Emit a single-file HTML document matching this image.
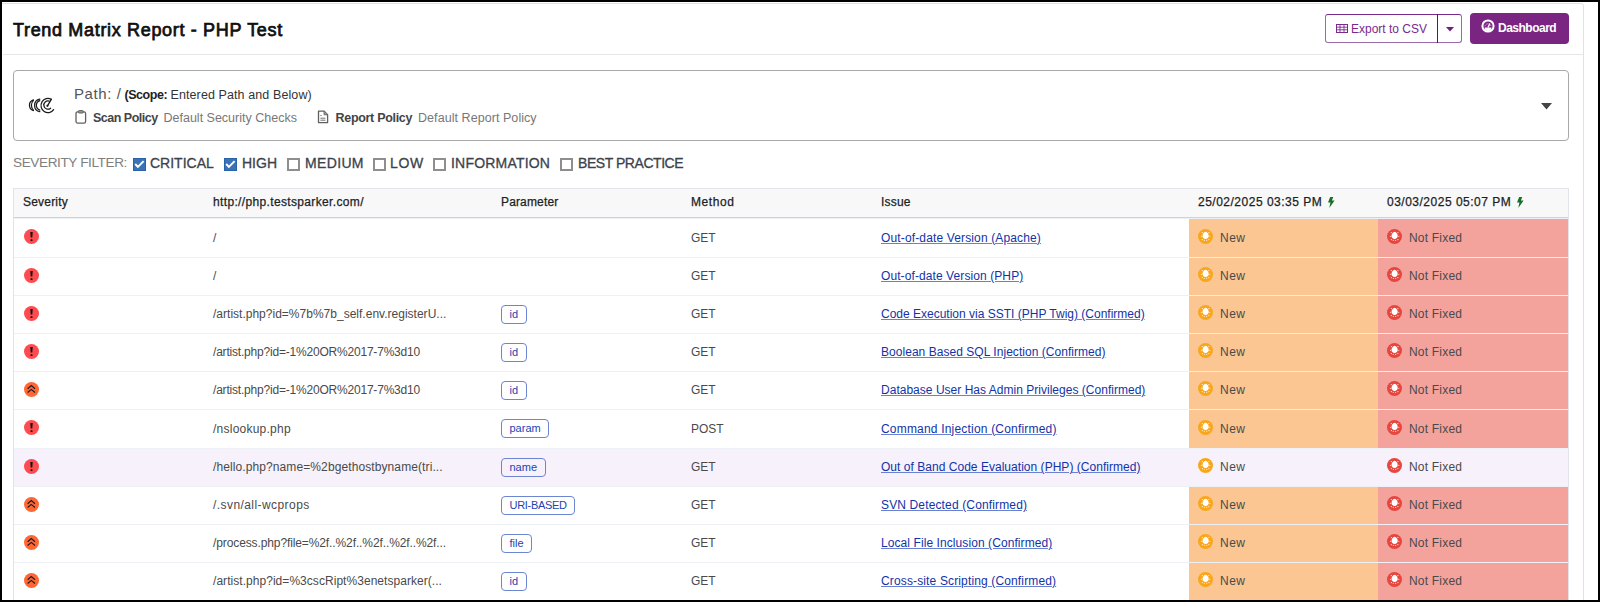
<!DOCTYPE html>
<html><head><meta charset="utf-8">
<style>
*{box-sizing:border-box;margin:0;padding:0}
html,body{width:1600px;height:602px;overflow:hidden;background:#fff;font-family:"Liberation Sans",sans-serif;color:#222}
.frame{position:absolute;left:0;top:0;width:1600px;height:602px;border:2px solid #000;pointer-events:none;z-index:50}
.card{position:absolute;left:-2px;top:3px;width:1586px;height:700px;border:1px solid #e2e2e2;border-radius:3px}
.hdrline{position:absolute;left:3px;top:54px;width:1580px;height:1px;background:#e6e6e6}
.abs{position:absolute;white-space:nowrap}
.title{left:13px;top:21px;font-size:18px;line-height:18px;font-weight:normal;color:#111;letter-spacing:0.67px;-webkit-text-stroke:0.75px #111}
.btn-exp{position:absolute;left:1325px;top:14px;width:137px;height:29px;border:1px solid #9b6aa8;border-top-color:#7a2a8a;border-radius:3px;background:#fff}
.btn-exp .dv{position:absolute;left:111px;top:-1px;width:1px;height:29px;background:#5f1070}
.btn-exp .tx{position:absolute;left:25px;top:8px;font-size:12px;line-height:12px;color:#7b2a8c}
.btn-dash{position:absolute;left:1470px;top:13px;width:99px;height:31px;background:#7b2583;border-radius:4px}
.btn-dash .tx{position:absolute;left:28px;top:9px;font-size:12px;line-height:12px;color:#fff;font-weight:bold;letter-spacing:-0.5px}
.pathbox{position:absolute;left:13px;top:70px;width:1556px;height:71px;border:1px solid #a8a8a8;border-radius:4px}
.t15{font-size:15px;line-height:15px;color:#555;letter-spacing:0.6px}
.t12{font-size:12.5px;line-height:13px;color:#555}
.b{font-weight:bold;color:#444}
.lite{color:#777}
.filter{top:156px;font-size:14px;line-height:14px;color:#3c424c;-webkit-text-stroke:0.3px #3c424c}
.cb{position:absolute;top:158px;width:13px;height:13px}
.cb.on{background:#3a72b8;border:1px solid #2a62a8}
.cb.off{border:2px solid #8e8e8e;background:#fff}
.tbl{position:absolute;left:13px;top:188px;width:1556px;height:420px;border:1px solid #e1e4e9;border-bottom:none}
.th{position:absolute;left:0;top:0;width:1554px;height:29px;background:#f8f8f8;border-bottom:1px solid #d2d2d2}
.hc{position:absolute;top:7px;letter-spacing:0.2px;font-size:12px;line-height:12px;color:#1e1e1e;white-space:nowrap;-webkit-text-stroke:0.25px #1e1e1e}
.row{position:absolute;left:0;width:1554px;border-top:1px solid #edf1f6}
.row.hov{background:#f6f1fb}
.c{position:absolute;top:0;white-space:nowrap;font-size:12px;line-height:12px;color:#4a4a4a}
.new{position:absolute;left:1175px;top:0;width:189px;bottom:0;background:#fbc692}
.nf{position:absolute;left:1364px;top:0;width:190px;bottom:0;background:#f4a39c}
.hov .new,.hov .nf{background:transparent}
.badge{position:absolute;height:19px;border:1px solid #6d86d2;border-radius:4px;font-size:11px;line-height:17px;color:#2343b4;padding:0 7.5px}
.lnk{color:#1233a8;text-decoration:underline;text-decoration-color:#6a80d0;text-underline-offset:1px}
</style></head><body>
<div class="card"></div>
<div class="hdrline"></div>
<div class="abs title">Trend Matrix Report - PHP Test</div>
<div class="btn-exp">
 <svg style="position:absolute;left:10px;top:9px" width="12" height="9" viewBox="0 0 12 9"><rect x="0.5" y="0.5" width="11" height="8" fill="none" stroke="#7b2a8c" stroke-width="1"/><path d="M0 3.2H12M0 5.8H12M4 0V9M8 0V9" stroke="#7b2a8c" stroke-width="0.9"/></svg>
 <div class="tx">Export to CSV</div>
 <div class="dv"></div>
 <svg style="position:absolute;left:120px;top:12px" width="8" height="5" viewBox="0 0 8 5"><path d="M0 0H8L4 4.5Z" fill="#6f1f80"/></svg>
</div>
<div class="btn-dash">
 <svg style="position:absolute;left:11px;top:6px" width="14" height="14" viewBox="0 0 14 14"><circle cx="7" cy="7" r="5.6" fill="none" stroke="#fff" stroke-width="2"/><path d="M3.6 8.6 A3.4 3.4 0 0 0 10.4 8.6 Z" fill="#fff"/><path d="M3.9 7.2 A3.2 3.2 0 0 1 10.1 7.2" fill="none" stroke="#fff" stroke-width="1" stroke-dasharray="0.9 0.9" opacity="0.85"/><path d="M7 8.4 L8.9 4.6" stroke="#fff" stroke-width="1.3"/></svg>
 <div class="tx">Dashboard</div>
</div>
<div class="pathbox">
 <svg style="position:absolute;left:14px;top:26px" width="28" height="18" viewBox="28 97 28 18">
  <g fill="none" stroke="#1a1a1a" stroke-width="1.25" stroke-linecap="round">
   <path d="M33.4 99.9 A5.6 5.6 0 0 0 33.4 110.6"/><path d="M33.4 100.4 A6.9 6.9 0 0 0 33.4 110.1"/>
   <path d="M39.8 99.2 A6.3 6.3 0 0 0 39.8 111.6"/><path d="M39.8 100.6 A5 5 0 0 0 39.8 110.1"/>
   <path d="M51.3 99.4 A6.9 7.1 0 1 0 53.6 109.6"/>
   <path d="M49.2 101.2 A4.1 4.1 0 1 0 50.6 108.2"/>
   <path d="M51.3 99.4 L47.6 105.6"/>
  </g>
  <circle cx="47.4" cy="105.8" r="1.1" fill="#1a1a1a"/>
 </svg>
 <div class="abs t15" style="left:60px;top:15px">Path: /</div>
 <div class="abs t12 b" style="left:110.5px;top:18px;color:#222;letter-spacing:-0.45px">(Scope:</div>
 <div class="abs t12" style="left:156.5px;top:18px;color:#333;letter-spacing:0.1px">Entered Path and Below)</div>
 <svg style="position:absolute;left:61px;top:39px" width="12" height="14" viewBox="0 0 12 14"><rect x="1" y="1.8" width="9.6" height="11.3" rx="1.6" fill="none" stroke="#606060" stroke-width="1.3"/><rect x="3.2" y="0.6" width="5.2" height="2.4" rx="1" fill="#9a9a9a" stroke="#606060" stroke-width="1"/></svg>
 <div class="abs t12 b" style="left:79px;top:41px;letter-spacing:-0.5px">Scan Policy</div>
 <div class="abs t12 lite" style="left:149.5px;top:41px">Default Security Checks</div>
 <svg style="position:absolute;left:303px;top:39px" width="12" height="14" viewBox="0 0 12 14"><path d="M1.5 1.2 H7.2 L10.6 4.6 V12.6 H1.5 Z" fill="none" stroke="#606060" stroke-width="1.3" stroke-linejoin="round"/><path d="M7 1.2 V4.8 H10.6" fill="#999" stroke="#606060" stroke-width="0.8"/><path d="M3.4 5.5H4.6M3.4 8.2H8.4M3.4 10.2H8.4" stroke="#707070" stroke-width="1"/></svg>
 <div class="abs t12 b" style="left:321.5px;top:41px;letter-spacing:-0.3px">Report Policy</div>
 <div class="abs t12 lite" style="left:404px;top:41px;letter-spacing:0.06px">Default Report Policy</div>
 <svg style="position:absolute;left:1527px;top:32px" width="11" height="7" viewBox="0 0 11 7"><path d="M0 0H11L5.5 6.5Z" fill="#444"/></svg>
</div>

<div class="abs filter" style="left:13px;top:155.5px;font-size:13.6px;color:#808080;-webkit-text-stroke:0;letter-spacing:-0.4px">SEVERITY FILTER:</div>
<div class="cb on" style="left:133px"><svg style="position:absolute;left:-1px;top:-1px" width="13" height="13" viewBox="0 0 13 13"><path d="M2.2 6 L4.9 8.9 L10.6 3.2" stroke="#fff" stroke-width="1.9" fill="none"/></svg></div>
<div class="abs filter" style="left:150px;letter-spacing:0.00px">CRITICAL</div>
<div class="cb on" style="left:224px"><svg style="position:absolute;left:-1px;top:-1px" width="13" height="13" viewBox="0 0 13 13"><path d="M2.2 6 L4.9 8.9 L10.6 3.2" stroke="#fff" stroke-width="1.9" fill="none"/></svg></div>
<div class="abs filter" style="left:242px;letter-spacing:0.00px">HIGH</div>
<div class="cb off" style="left:287px"></div>
<div class="abs filter" style="left:305px;letter-spacing:0.35px">MEDIUM</div>
<div class="cb off" style="left:373px"></div>
<div class="abs filter" style="left:390px;letter-spacing:0.60px">LOW</div>
<div class="cb off" style="left:433px"></div>
<div class="abs filter" style="left:451px;letter-spacing:0.20px">INFORMATION</div>
<div class="cb off" style="left:560px"></div>
<div class="abs filter" style="left:578px;letter-spacing:-0.45px">BEST PRACTICE</div>
<div class="tbl">
<div class="th">
<div class="hc" style="left:9px;letter-spacing:0.20px">Severity</div>
<div class="hc" style="left:199px;letter-spacing:0.35px">http://php.testsparker.com/</div>
<div class="hc" style="left:487px;letter-spacing:0.15px">Parameter</div>
<div class="hc" style="left:677px;letter-spacing:0.60px">Method</div>
<div class="hc" style="left:867px;letter-spacing:0.20px">Issue</div>
<div class="hc" style="left:1184px;letter-spacing:0.5px">25/02/2025 03:35 PM <span style="display:inline-block;vertical-align:-1.5px;margin-left:2px"><svg width="7" height="11" viewBox="0 0 7 11"><path d="M2.2 0 L5.2 0 L3.9 3.6 L6.6 3.6 L1.3 11 L2.4 5.6 L0 5.6 Z" fill="#17702a"/></svg></span></div>
<div class="hc" style="left:1373px;letter-spacing:0.5px">03/03/2025 05:07 PM <span style="display:inline-block;vertical-align:-1.5px;margin-left:2px"><svg width="7" height="11" viewBox="0 0 7 11"><path d="M2.2 0 L5.2 0 L3.9 3.6 L6.6 3.6 L1.3 11 L2.4 5.6 L0 5.6 Z" fill="#17702a"/></svg></span></div>
</div>
<div class="row" style="top:29px;height:39px">
<div class="new"></div><div class="nf"></div>
<div class="c" style="left:9.7px;top:10.0px;height:15px"><svg width="15" height="15" viewBox="0 0 15 15"><circle cx="7.5" cy="7.5" r="7.5" fill="#fd4b4f"/><path d="M6.3 3.1 H8.7 L8.3 8.4 H6.7 Z" fill="#111"/><rect x="6.55" y="10.3" width="1.9" height="1.8" rx="0.3" fill="#111"/></svg></div>
<div class="c" style="left:199px;top:12.5px;letter-spacing:0.000px">/</div>
<div class="c" style="left:677px;top:12.5px">GET</div>
<div class="c lnk" style="left:867px;top:12.5px;letter-spacing:0.140px">Out-of-date Version (Apache)</div>
<div class="c" style="left:1184px;top:10.0px;height:15px"><svg width="15" height="15" viewBox="0 0 15 15"><circle cx="7.5" cy="7.5" r="7.5" fill="#f9a61b"/><path d="M7.6 2.8 C9.3 3.3 10.7 4.9 10.7 7.1 C10.7 9 9.4 9.9 7.6 9.9 C5.8 9.9 4.5 9 4.5 7.1 C4.5 4.9 5.9 3.3 7.6 2.8 Z" fill="#fff"/><circle cx="4.30" cy="3.60" r="0.55" fill="#fff"/><circle cx="10.90" cy="3.60" r="0.55" fill="#fff"/><circle cx="3.40" cy="7.30" r="0.55" fill="#fff"/><circle cx="11.80" cy="7.30" r="0.55" fill="#fff"/><circle cx="4.30" cy="10.60" r="0.55" fill="#fff"/><circle cx="10.90" cy="10.60" r="0.55" fill="#fff"/><circle cx="6.30" cy="11.30" r="0.55" fill="#fff"/><circle cx="8.70" cy="11.30" r="0.55" fill="#fff"/></svg></div>
<div class="c" style="left:1206px;top:12.5px;letter-spacing:0.5px">New</div>
<div class="c" style="left:1373px;top:10.0px;height:15px"><svg width="15" height="15" viewBox="0 0 15 15"><circle cx="7.5" cy="7.5" r="7.5" fill="#e6463e"/><path d="M7.6 2.8 C9.3 3.3 10.7 4.9 10.7 7.1 C10.7 9 9.4 9.9 7.6 9.9 C5.8 9.9 4.5 9 4.5 7.1 C4.5 4.9 5.9 3.3 7.6 2.8 Z" fill="#fff"/><circle cx="4.30" cy="3.60" r="0.55" fill="#fff"/><circle cx="10.90" cy="3.60" r="0.55" fill="#fff"/><circle cx="3.40" cy="7.30" r="0.55" fill="#fff"/><circle cx="11.80" cy="7.30" r="0.55" fill="#fff"/><circle cx="4.30" cy="10.60" r="0.55" fill="#fff"/><circle cx="10.90" cy="10.60" r="0.55" fill="#fff"/><circle cx="6.30" cy="11.30" r="0.55" fill="#fff"/><circle cx="8.70" cy="11.30" r="0.55" fill="#fff"/></svg></div>
<div class="c" style="left:1395px;top:12.5px;letter-spacing:0.2px">Not Fixed</div>
</div>
<div class="row" style="top:68px;height:38px">
<div class="new"></div><div class="nf"></div>
<div class="c" style="left:9.7px;top:10.0px;height:15px"><svg width="15" height="15" viewBox="0 0 15 15"><circle cx="7.5" cy="7.5" r="7.5" fill="#fd4b4f"/><path d="M6.3 3.1 H8.7 L8.3 8.4 H6.7 Z" fill="#111"/><rect x="6.55" y="10.3" width="1.9" height="1.8" rx="0.3" fill="#111"/></svg></div>
<div class="c" style="left:199px;top:12.0px;letter-spacing:0.000px">/</div>
<div class="c" style="left:677px;top:12.0px">GET</div>
<div class="c lnk" style="left:867px;top:12.0px;letter-spacing:0.090px">Out-of-date Version (PHP)</div>
<div class="c" style="left:1184px;top:9.0px;height:15px"><svg width="15" height="15" viewBox="0 0 15 15"><circle cx="7.5" cy="7.5" r="7.5" fill="#f9a61b"/><path d="M7.6 2.8 C9.3 3.3 10.7 4.9 10.7 7.1 C10.7 9 9.4 9.9 7.6 9.9 C5.8 9.9 4.5 9 4.5 7.1 C4.5 4.9 5.9 3.3 7.6 2.8 Z" fill="#fff"/><circle cx="4.30" cy="3.60" r="0.55" fill="#fff"/><circle cx="10.90" cy="3.60" r="0.55" fill="#fff"/><circle cx="3.40" cy="7.30" r="0.55" fill="#fff"/><circle cx="11.80" cy="7.30" r="0.55" fill="#fff"/><circle cx="4.30" cy="10.60" r="0.55" fill="#fff"/><circle cx="10.90" cy="10.60" r="0.55" fill="#fff"/><circle cx="6.30" cy="11.30" r="0.55" fill="#fff"/><circle cx="8.70" cy="11.30" r="0.55" fill="#fff"/></svg></div>
<div class="c" style="left:1206px;top:12.0px;letter-spacing:0.5px">New</div>
<div class="c" style="left:1373px;top:9.0px;height:15px"><svg width="15" height="15" viewBox="0 0 15 15"><circle cx="7.5" cy="7.5" r="7.5" fill="#e6463e"/><path d="M7.6 2.8 C9.3 3.3 10.7 4.9 10.7 7.1 C10.7 9 9.4 9.9 7.6 9.9 C5.8 9.9 4.5 9 4.5 7.1 C4.5 4.9 5.9 3.3 7.6 2.8 Z" fill="#fff"/><circle cx="4.30" cy="3.60" r="0.55" fill="#fff"/><circle cx="10.90" cy="3.60" r="0.55" fill="#fff"/><circle cx="3.40" cy="7.30" r="0.55" fill="#fff"/><circle cx="11.80" cy="7.30" r="0.55" fill="#fff"/><circle cx="4.30" cy="10.60" r="0.55" fill="#fff"/><circle cx="10.90" cy="10.60" r="0.55" fill="#fff"/><circle cx="6.30" cy="11.30" r="0.55" fill="#fff"/><circle cx="8.70" cy="11.30" r="0.55" fill="#fff"/></svg></div>
<div class="c" style="left:1395px;top:12.0px;letter-spacing:0.2px">Not Fixed</div>
</div>
<div class="row" style="top:106px;height:38px">
<div class="new"></div><div class="nf"></div>
<div class="c" style="left:9.7px;top:10.0px;height:15px"><svg width="15" height="15" viewBox="0 0 15 15"><circle cx="7.5" cy="7.5" r="7.5" fill="#fd4b4f"/><path d="M6.3 3.1 H8.7 L8.3 8.4 H6.7 Z" fill="#111"/><rect x="6.55" y="10.3" width="1.9" height="1.8" rx="0.3" fill="#111"/></svg></div>
<div class="c" style="left:199px;top:12.0px;letter-spacing:0.010px">/artist.php?id=%7b%7b_self.env.registerU...</div>
<div class="badge" style="left:487px;top:9.0px;letter-spacing:0">id</div>
<div class="c" style="left:677px;top:12.0px">GET</div>
<div class="c lnk" style="left:867px;top:12.0px;letter-spacing:0.000px">Code Execution via SSTI (PHP Twig) (Confirmed)</div>
<div class="c" style="left:1184px;top:9.0px;height:15px"><svg width="15" height="15" viewBox="0 0 15 15"><circle cx="7.5" cy="7.5" r="7.5" fill="#f9a61b"/><path d="M7.6 2.8 C9.3 3.3 10.7 4.9 10.7 7.1 C10.7 9 9.4 9.9 7.6 9.9 C5.8 9.9 4.5 9 4.5 7.1 C4.5 4.9 5.9 3.3 7.6 2.8 Z" fill="#fff"/><circle cx="4.30" cy="3.60" r="0.55" fill="#fff"/><circle cx="10.90" cy="3.60" r="0.55" fill="#fff"/><circle cx="3.40" cy="7.30" r="0.55" fill="#fff"/><circle cx="11.80" cy="7.30" r="0.55" fill="#fff"/><circle cx="4.30" cy="10.60" r="0.55" fill="#fff"/><circle cx="10.90" cy="10.60" r="0.55" fill="#fff"/><circle cx="6.30" cy="11.30" r="0.55" fill="#fff"/><circle cx="8.70" cy="11.30" r="0.55" fill="#fff"/></svg></div>
<div class="c" style="left:1206px;top:12.0px;letter-spacing:0.5px">New</div>
<div class="c" style="left:1373px;top:9.0px;height:15px"><svg width="15" height="15" viewBox="0 0 15 15"><circle cx="7.5" cy="7.5" r="7.5" fill="#e6463e"/><path d="M7.6 2.8 C9.3 3.3 10.7 4.9 10.7 7.1 C10.7 9 9.4 9.9 7.6 9.9 C5.8 9.9 4.5 9 4.5 7.1 C4.5 4.9 5.9 3.3 7.6 2.8 Z" fill="#fff"/><circle cx="4.30" cy="3.60" r="0.55" fill="#fff"/><circle cx="10.90" cy="3.60" r="0.55" fill="#fff"/><circle cx="3.40" cy="7.30" r="0.55" fill="#fff"/><circle cx="11.80" cy="7.30" r="0.55" fill="#fff"/><circle cx="4.30" cy="10.60" r="0.55" fill="#fff"/><circle cx="10.90" cy="10.60" r="0.55" fill="#fff"/><circle cx="6.30" cy="11.30" r="0.55" fill="#fff"/><circle cx="8.70" cy="11.30" r="0.55" fill="#fff"/></svg></div>
<div class="c" style="left:1395px;top:12.0px;letter-spacing:0.2px">Not Fixed</div>
</div>
<div class="row" style="top:144px;height:38px">
<div class="new"></div><div class="nf"></div>
<div class="c" style="left:9.7px;top:10.0px;height:15px"><svg width="15" height="15" viewBox="0 0 15 15"><circle cx="7.5" cy="7.5" r="7.5" fill="#fd4b4f"/><path d="M6.3 3.1 H8.7 L8.3 8.4 H6.7 Z" fill="#111"/><rect x="6.55" y="10.3" width="1.9" height="1.8" rx="0.3" fill="#111"/></svg></div>
<div class="c" style="left:199px;top:12.0px;letter-spacing:-0.200px">/artist.php?id=-1%20OR%2017-7%3d10</div>
<div class="badge" style="left:487px;top:9.0px;letter-spacing:0">id</div>
<div class="c" style="left:677px;top:12.0px">GET</div>
<div class="c lnk" style="left:867px;top:12.0px;letter-spacing:0.040px">Boolean Based SQL Injection (Confirmed)</div>
<div class="c" style="left:1184px;top:9.0px;height:15px"><svg width="15" height="15" viewBox="0 0 15 15"><circle cx="7.5" cy="7.5" r="7.5" fill="#f9a61b"/><path d="M7.6 2.8 C9.3 3.3 10.7 4.9 10.7 7.1 C10.7 9 9.4 9.9 7.6 9.9 C5.8 9.9 4.5 9 4.5 7.1 C4.5 4.9 5.9 3.3 7.6 2.8 Z" fill="#fff"/><circle cx="4.30" cy="3.60" r="0.55" fill="#fff"/><circle cx="10.90" cy="3.60" r="0.55" fill="#fff"/><circle cx="3.40" cy="7.30" r="0.55" fill="#fff"/><circle cx="11.80" cy="7.30" r="0.55" fill="#fff"/><circle cx="4.30" cy="10.60" r="0.55" fill="#fff"/><circle cx="10.90" cy="10.60" r="0.55" fill="#fff"/><circle cx="6.30" cy="11.30" r="0.55" fill="#fff"/><circle cx="8.70" cy="11.30" r="0.55" fill="#fff"/></svg></div>
<div class="c" style="left:1206px;top:12.0px;letter-spacing:0.5px">New</div>
<div class="c" style="left:1373px;top:9.0px;height:15px"><svg width="15" height="15" viewBox="0 0 15 15"><circle cx="7.5" cy="7.5" r="7.5" fill="#e6463e"/><path d="M7.6 2.8 C9.3 3.3 10.7 4.9 10.7 7.1 C10.7 9 9.4 9.9 7.6 9.9 C5.8 9.9 4.5 9 4.5 7.1 C4.5 4.9 5.9 3.3 7.6 2.8 Z" fill="#fff"/><circle cx="4.30" cy="3.60" r="0.55" fill="#fff"/><circle cx="10.90" cy="3.60" r="0.55" fill="#fff"/><circle cx="3.40" cy="7.30" r="0.55" fill="#fff"/><circle cx="11.80" cy="7.30" r="0.55" fill="#fff"/><circle cx="4.30" cy="10.60" r="0.55" fill="#fff"/><circle cx="10.90" cy="10.60" r="0.55" fill="#fff"/><circle cx="6.30" cy="11.30" r="0.55" fill="#fff"/><circle cx="8.70" cy="11.30" r="0.55" fill="#fff"/></svg></div>
<div class="c" style="left:1395px;top:12.0px;letter-spacing:0.2px">Not Fixed</div>
</div>
<div class="row" style="top:182px;height:38px">
<div class="new"></div><div class="nf"></div>
<div class="c" style="left:9.7px;top:10.0px;height:15px"><svg width="15" height="15" viewBox="0 0 15 15"><circle cx="7.5" cy="7.5" r="7.5" fill="#fe6732"/><path d="M3.6 6.7 L7.3 3.5 L11 6.7 M3.6 10.5 L7.3 7.4 L11 10.5" stroke="#1a1a2a" stroke-width="1.15" fill="none"/></svg></div>
<div class="c" style="left:199px;top:12.0px;letter-spacing:-0.200px">/artist.php?id=-1%20OR%2017-7%3d10</div>
<div class="badge" style="left:487px;top:9.0px;letter-spacing:0">id</div>
<div class="c" style="left:677px;top:12.0px">GET</div>
<div class="c lnk" style="left:867px;top:12.0px;letter-spacing:0.020px">Database User Has Admin Privileges (Confirmed)</div>
<div class="c" style="left:1184px;top:9.0px;height:15px"><svg width="15" height="15" viewBox="0 0 15 15"><circle cx="7.5" cy="7.5" r="7.5" fill="#f9a61b"/><path d="M7.6 2.8 C9.3 3.3 10.7 4.9 10.7 7.1 C10.7 9 9.4 9.9 7.6 9.9 C5.8 9.9 4.5 9 4.5 7.1 C4.5 4.9 5.9 3.3 7.6 2.8 Z" fill="#fff"/><circle cx="4.30" cy="3.60" r="0.55" fill="#fff"/><circle cx="10.90" cy="3.60" r="0.55" fill="#fff"/><circle cx="3.40" cy="7.30" r="0.55" fill="#fff"/><circle cx="11.80" cy="7.30" r="0.55" fill="#fff"/><circle cx="4.30" cy="10.60" r="0.55" fill="#fff"/><circle cx="10.90" cy="10.60" r="0.55" fill="#fff"/><circle cx="6.30" cy="11.30" r="0.55" fill="#fff"/><circle cx="8.70" cy="11.30" r="0.55" fill="#fff"/></svg></div>
<div class="c" style="left:1206px;top:12.0px;letter-spacing:0.5px">New</div>
<div class="c" style="left:1373px;top:9.0px;height:15px"><svg width="15" height="15" viewBox="0 0 15 15"><circle cx="7.5" cy="7.5" r="7.5" fill="#e6463e"/><path d="M7.6 2.8 C9.3 3.3 10.7 4.9 10.7 7.1 C10.7 9 9.4 9.9 7.6 9.9 C5.8 9.9 4.5 9 4.5 7.1 C4.5 4.9 5.9 3.3 7.6 2.8 Z" fill="#fff"/><circle cx="4.30" cy="3.60" r="0.55" fill="#fff"/><circle cx="10.90" cy="3.60" r="0.55" fill="#fff"/><circle cx="3.40" cy="7.30" r="0.55" fill="#fff"/><circle cx="11.80" cy="7.30" r="0.55" fill="#fff"/><circle cx="4.30" cy="10.60" r="0.55" fill="#fff"/><circle cx="10.90" cy="10.60" r="0.55" fill="#fff"/><circle cx="6.30" cy="11.30" r="0.55" fill="#fff"/><circle cx="8.70" cy="11.30" r="0.55" fill="#fff"/></svg></div>
<div class="c" style="left:1395px;top:12.0px;letter-spacing:0.2px">Not Fixed</div>
</div>
<div class="row" style="top:220px;height:39px">
<div class="new"></div><div class="nf"></div>
<div class="c" style="left:9.7px;top:10.0px;height:15px"><svg width="15" height="15" viewBox="0 0 15 15"><circle cx="7.5" cy="7.5" r="7.5" fill="#fd4b4f"/><path d="M6.3 3.1 H8.7 L8.3 8.4 H6.7 Z" fill="#111"/><rect x="6.55" y="10.3" width="1.9" height="1.8" rx="0.3" fill="#111"/></svg></div>
<div class="c" style="left:199px;top:12.5px;letter-spacing:0.240px">/nslookup.php</div>
<div class="badge" style="left:487px;top:9.0px;letter-spacing:0">param</div>
<div class="c" style="left:677px;top:12.5px">POST</div>
<div class="c lnk" style="left:867px;top:12.5px;letter-spacing:0.190px">Command Injection (Confirmed)</div>
<div class="c" style="left:1184px;top:10.0px;height:15px"><svg width="15" height="15" viewBox="0 0 15 15"><circle cx="7.5" cy="7.5" r="7.5" fill="#f9a61b"/><path d="M7.6 2.8 C9.3 3.3 10.7 4.9 10.7 7.1 C10.7 9 9.4 9.9 7.6 9.9 C5.8 9.9 4.5 9 4.5 7.1 C4.5 4.9 5.9 3.3 7.6 2.8 Z" fill="#fff"/><circle cx="4.30" cy="3.60" r="0.55" fill="#fff"/><circle cx="10.90" cy="3.60" r="0.55" fill="#fff"/><circle cx="3.40" cy="7.30" r="0.55" fill="#fff"/><circle cx="11.80" cy="7.30" r="0.55" fill="#fff"/><circle cx="4.30" cy="10.60" r="0.55" fill="#fff"/><circle cx="10.90" cy="10.60" r="0.55" fill="#fff"/><circle cx="6.30" cy="11.30" r="0.55" fill="#fff"/><circle cx="8.70" cy="11.30" r="0.55" fill="#fff"/></svg></div>
<div class="c" style="left:1206px;top:12.5px;letter-spacing:0.5px">New</div>
<div class="c" style="left:1373px;top:10.0px;height:15px"><svg width="15" height="15" viewBox="0 0 15 15"><circle cx="7.5" cy="7.5" r="7.5" fill="#e6463e"/><path d="M7.6 2.8 C9.3 3.3 10.7 4.9 10.7 7.1 C10.7 9 9.4 9.9 7.6 9.9 C5.8 9.9 4.5 9 4.5 7.1 C4.5 4.9 5.9 3.3 7.6 2.8 Z" fill="#fff"/><circle cx="4.30" cy="3.60" r="0.55" fill="#fff"/><circle cx="10.90" cy="3.60" r="0.55" fill="#fff"/><circle cx="3.40" cy="7.30" r="0.55" fill="#fff"/><circle cx="11.80" cy="7.30" r="0.55" fill="#fff"/><circle cx="4.30" cy="10.60" r="0.55" fill="#fff"/><circle cx="10.90" cy="10.60" r="0.55" fill="#fff"/><circle cx="6.30" cy="11.30" r="0.55" fill="#fff"/><circle cx="8.70" cy="11.30" r="0.55" fill="#fff"/></svg></div>
<div class="c" style="left:1395px;top:12.5px;letter-spacing:0.2px">Not Fixed</div>
</div>
<div class="row hov" style="top:259px;height:38px">
<div class="new"></div><div class="nf"></div>
<div class="c" style="left:9.7px;top:10.0px;height:15px"><svg width="15" height="15" viewBox="0 0 15 15"><circle cx="7.5" cy="7.5" r="7.5" fill="#fd4b4f"/><path d="M6.3 3.1 H8.7 L8.3 8.4 H6.7 Z" fill="#111"/><rect x="6.55" y="10.3" width="1.9" height="1.8" rx="0.3" fill="#111"/></svg></div>
<div class="c" style="left:199px;top:12.0px;letter-spacing:0.100px">/hello.php?name=%2bgethostbyname(tri...</div>
<div class="badge" style="left:487px;top:9.0px;letter-spacing:0">name</div>
<div class="c" style="left:677px;top:12.0px">GET</div>
<div class="c lnk" style="left:867px;top:12.0px;letter-spacing:0.030px">Out of Band Code Evaluation (PHP) (Confirmed)</div>
<div class="c" style="left:1184px;top:9.0px;height:15px"><svg width="15" height="15" viewBox="0 0 15 15"><circle cx="7.5" cy="7.5" r="7.5" fill="#f9a61b"/><path d="M7.6 2.8 C9.3 3.3 10.7 4.9 10.7 7.1 C10.7 9 9.4 9.9 7.6 9.9 C5.8 9.9 4.5 9 4.5 7.1 C4.5 4.9 5.9 3.3 7.6 2.8 Z" fill="#fff"/><circle cx="4.30" cy="3.60" r="0.55" fill="#fff"/><circle cx="10.90" cy="3.60" r="0.55" fill="#fff"/><circle cx="3.40" cy="7.30" r="0.55" fill="#fff"/><circle cx="11.80" cy="7.30" r="0.55" fill="#fff"/><circle cx="4.30" cy="10.60" r="0.55" fill="#fff"/><circle cx="10.90" cy="10.60" r="0.55" fill="#fff"/><circle cx="6.30" cy="11.30" r="0.55" fill="#fff"/><circle cx="8.70" cy="11.30" r="0.55" fill="#fff"/></svg></div>
<div class="c" style="left:1206px;top:12.0px;letter-spacing:0.5px">New</div>
<div class="c" style="left:1373px;top:9.0px;height:15px"><svg width="15" height="15" viewBox="0 0 15 15"><circle cx="7.5" cy="7.5" r="7.5" fill="#e6463e"/><path d="M7.6 2.8 C9.3 3.3 10.7 4.9 10.7 7.1 C10.7 9 9.4 9.9 7.6 9.9 C5.8 9.9 4.5 9 4.5 7.1 C4.5 4.9 5.9 3.3 7.6 2.8 Z" fill="#fff"/><circle cx="4.30" cy="3.60" r="0.55" fill="#fff"/><circle cx="10.90" cy="3.60" r="0.55" fill="#fff"/><circle cx="3.40" cy="7.30" r="0.55" fill="#fff"/><circle cx="11.80" cy="7.30" r="0.55" fill="#fff"/><circle cx="4.30" cy="10.60" r="0.55" fill="#fff"/><circle cx="10.90" cy="10.60" r="0.55" fill="#fff"/><circle cx="6.30" cy="11.30" r="0.55" fill="#fff"/><circle cx="8.70" cy="11.30" r="0.55" fill="#fff"/></svg></div>
<div class="c" style="left:1395px;top:12.0px;letter-spacing:0.2px">Not Fixed</div>
</div>
<div class="row" style="top:297px;height:38px">
<div class="new"></div><div class="nf"></div>
<div class="c" style="left:9.7px;top:10.0px;height:15px"><svg width="15" height="15" viewBox="0 0 15 15"><circle cx="7.5" cy="7.5" r="7.5" fill="#fe6732"/><path d="M3.6 6.7 L7.3 3.5 L11 6.7 M3.6 10.5 L7.3 7.4 L11 10.5" stroke="#1a1a2a" stroke-width="1.15" fill="none"/></svg></div>
<div class="c" style="left:199px;top:12.0px;letter-spacing:0.430px">/.svn/all-wcprops</div>
<div class="badge" style="left:487px;top:9.0px;letter-spacing:-0.3px">URI-BASED</div>
<div class="c" style="left:677px;top:12.0px">GET</div>
<div class="c lnk" style="left:867px;top:12.0px;letter-spacing:0.140px">SVN Detected (Confirmed)</div>
<div class="c" style="left:1184px;top:9.0px;height:15px"><svg width="15" height="15" viewBox="0 0 15 15"><circle cx="7.5" cy="7.5" r="7.5" fill="#f9a61b"/><path d="M7.6 2.8 C9.3 3.3 10.7 4.9 10.7 7.1 C10.7 9 9.4 9.9 7.6 9.9 C5.8 9.9 4.5 9 4.5 7.1 C4.5 4.9 5.9 3.3 7.6 2.8 Z" fill="#fff"/><circle cx="4.30" cy="3.60" r="0.55" fill="#fff"/><circle cx="10.90" cy="3.60" r="0.55" fill="#fff"/><circle cx="3.40" cy="7.30" r="0.55" fill="#fff"/><circle cx="11.80" cy="7.30" r="0.55" fill="#fff"/><circle cx="4.30" cy="10.60" r="0.55" fill="#fff"/><circle cx="10.90" cy="10.60" r="0.55" fill="#fff"/><circle cx="6.30" cy="11.30" r="0.55" fill="#fff"/><circle cx="8.70" cy="11.30" r="0.55" fill="#fff"/></svg></div>
<div class="c" style="left:1206px;top:12.0px;letter-spacing:0.5px">New</div>
<div class="c" style="left:1373px;top:9.0px;height:15px"><svg width="15" height="15" viewBox="0 0 15 15"><circle cx="7.5" cy="7.5" r="7.5" fill="#e6463e"/><path d="M7.6 2.8 C9.3 3.3 10.7 4.9 10.7 7.1 C10.7 9 9.4 9.9 7.6 9.9 C5.8 9.9 4.5 9 4.5 7.1 C4.5 4.9 5.9 3.3 7.6 2.8 Z" fill="#fff"/><circle cx="4.30" cy="3.60" r="0.55" fill="#fff"/><circle cx="10.90" cy="3.60" r="0.55" fill="#fff"/><circle cx="3.40" cy="7.30" r="0.55" fill="#fff"/><circle cx="11.80" cy="7.30" r="0.55" fill="#fff"/><circle cx="4.30" cy="10.60" r="0.55" fill="#fff"/><circle cx="10.90" cy="10.60" r="0.55" fill="#fff"/><circle cx="6.30" cy="11.30" r="0.55" fill="#fff"/><circle cx="8.70" cy="11.30" r="0.55" fill="#fff"/></svg></div>
<div class="c" style="left:1395px;top:12.0px;letter-spacing:0.2px">Not Fixed</div>
</div>
<div class="row" style="top:335px;height:38px">
<div class="new"></div><div class="nf"></div>
<div class="c" style="left:9.7px;top:10.0px;height:15px"><svg width="15" height="15" viewBox="0 0 15 15"><circle cx="7.5" cy="7.5" r="7.5" fill="#fe6732"/><path d="M3.6 6.7 L7.3 3.5 L11 6.7 M3.6 10.5 L7.3 7.4 L11 10.5" stroke="#1a1a2a" stroke-width="1.15" fill="none"/></svg></div>
<div class="c" style="left:199px;top:12.0px;letter-spacing:-0.110px">/process.php?file=%2f..%2f..%2f..%2f..%2f...</div>
<div class="badge" style="left:487px;top:9.0px;letter-spacing:0">file</div>
<div class="c" style="left:677px;top:12.0px">GET</div>
<div class="c lnk" style="left:867px;top:12.0px;letter-spacing:0.080px">Local File Inclusion (Confirmed)</div>
<div class="c" style="left:1184px;top:9.0px;height:15px"><svg width="15" height="15" viewBox="0 0 15 15"><circle cx="7.5" cy="7.5" r="7.5" fill="#f9a61b"/><path d="M7.6 2.8 C9.3 3.3 10.7 4.9 10.7 7.1 C10.7 9 9.4 9.9 7.6 9.9 C5.8 9.9 4.5 9 4.5 7.1 C4.5 4.9 5.9 3.3 7.6 2.8 Z" fill="#fff"/><circle cx="4.30" cy="3.60" r="0.55" fill="#fff"/><circle cx="10.90" cy="3.60" r="0.55" fill="#fff"/><circle cx="3.40" cy="7.30" r="0.55" fill="#fff"/><circle cx="11.80" cy="7.30" r="0.55" fill="#fff"/><circle cx="4.30" cy="10.60" r="0.55" fill="#fff"/><circle cx="10.90" cy="10.60" r="0.55" fill="#fff"/><circle cx="6.30" cy="11.30" r="0.55" fill="#fff"/><circle cx="8.70" cy="11.30" r="0.55" fill="#fff"/></svg></div>
<div class="c" style="left:1206px;top:12.0px;letter-spacing:0.5px">New</div>
<div class="c" style="left:1373px;top:9.0px;height:15px"><svg width="15" height="15" viewBox="0 0 15 15"><circle cx="7.5" cy="7.5" r="7.5" fill="#e6463e"/><path d="M7.6 2.8 C9.3 3.3 10.7 4.9 10.7 7.1 C10.7 9 9.4 9.9 7.6 9.9 C5.8 9.9 4.5 9 4.5 7.1 C4.5 4.9 5.9 3.3 7.6 2.8 Z" fill="#fff"/><circle cx="4.30" cy="3.60" r="0.55" fill="#fff"/><circle cx="10.90" cy="3.60" r="0.55" fill="#fff"/><circle cx="3.40" cy="7.30" r="0.55" fill="#fff"/><circle cx="11.80" cy="7.30" r="0.55" fill="#fff"/><circle cx="4.30" cy="10.60" r="0.55" fill="#fff"/><circle cx="10.90" cy="10.60" r="0.55" fill="#fff"/><circle cx="6.30" cy="11.30" r="0.55" fill="#fff"/><circle cx="8.70" cy="11.30" r="0.55" fill="#fff"/></svg></div>
<div class="c" style="left:1395px;top:12.0px;letter-spacing:0.2px">Not Fixed</div>
</div>
<div class="row" style="top:373px;height:38px">
<div class="new"></div><div class="nf"></div>
<div class="c" style="left:9.7px;top:10.0px;height:15px"><svg width="15" height="15" viewBox="0 0 15 15"><circle cx="7.5" cy="7.5" r="7.5" fill="#fe6732"/><path d="M3.6 6.7 L7.3 3.5 L11 6.7 M3.6 10.5 L7.3 7.4 L11 10.5" stroke="#1a1a2a" stroke-width="1.15" fill="none"/></svg></div>
<div class="c" style="left:199px;top:12.0px;letter-spacing:0.045px">/artist.php?id=%3cscRipt%3enetsparker(...</div>
<div class="badge" style="left:487px;top:9.0px;letter-spacing:0">id</div>
<div class="c" style="left:677px;top:12.0px">GET</div>
<div class="c lnk" style="left:867px;top:12.0px;letter-spacing:0.140px">Cross-site Scripting (Confirmed)</div>
<div class="c" style="left:1184px;top:9.0px;height:15px"><svg width="15" height="15" viewBox="0 0 15 15"><circle cx="7.5" cy="7.5" r="7.5" fill="#f9a61b"/><path d="M7.6 2.8 C9.3 3.3 10.7 4.9 10.7 7.1 C10.7 9 9.4 9.9 7.6 9.9 C5.8 9.9 4.5 9 4.5 7.1 C4.5 4.9 5.9 3.3 7.6 2.8 Z" fill="#fff"/><circle cx="4.30" cy="3.60" r="0.55" fill="#fff"/><circle cx="10.90" cy="3.60" r="0.55" fill="#fff"/><circle cx="3.40" cy="7.30" r="0.55" fill="#fff"/><circle cx="11.80" cy="7.30" r="0.55" fill="#fff"/><circle cx="4.30" cy="10.60" r="0.55" fill="#fff"/><circle cx="10.90" cy="10.60" r="0.55" fill="#fff"/><circle cx="6.30" cy="11.30" r="0.55" fill="#fff"/><circle cx="8.70" cy="11.30" r="0.55" fill="#fff"/></svg></div>
<div class="c" style="left:1206px;top:12.0px;letter-spacing:0.5px">New</div>
<div class="c" style="left:1373px;top:9.0px;height:15px"><svg width="15" height="15" viewBox="0 0 15 15"><circle cx="7.5" cy="7.5" r="7.5" fill="#e6463e"/><path d="M7.6 2.8 C9.3 3.3 10.7 4.9 10.7 7.1 C10.7 9 9.4 9.9 7.6 9.9 C5.8 9.9 4.5 9 4.5 7.1 C4.5 4.9 5.9 3.3 7.6 2.8 Z" fill="#fff"/><circle cx="4.30" cy="3.60" r="0.55" fill="#fff"/><circle cx="10.90" cy="3.60" r="0.55" fill="#fff"/><circle cx="3.40" cy="7.30" r="0.55" fill="#fff"/><circle cx="11.80" cy="7.30" r="0.55" fill="#fff"/><circle cx="4.30" cy="10.60" r="0.55" fill="#fff"/><circle cx="10.90" cy="10.60" r="0.55" fill="#fff"/><circle cx="6.30" cy="11.30" r="0.55" fill="#fff"/><circle cx="8.70" cy="11.30" r="0.55" fill="#fff"/></svg></div>
<div class="c" style="left:1395px;top:12.0px;letter-spacing:0.2px">Not Fixed</div>
</div>
</div>
<div class="frame"></div>
</body></html>
